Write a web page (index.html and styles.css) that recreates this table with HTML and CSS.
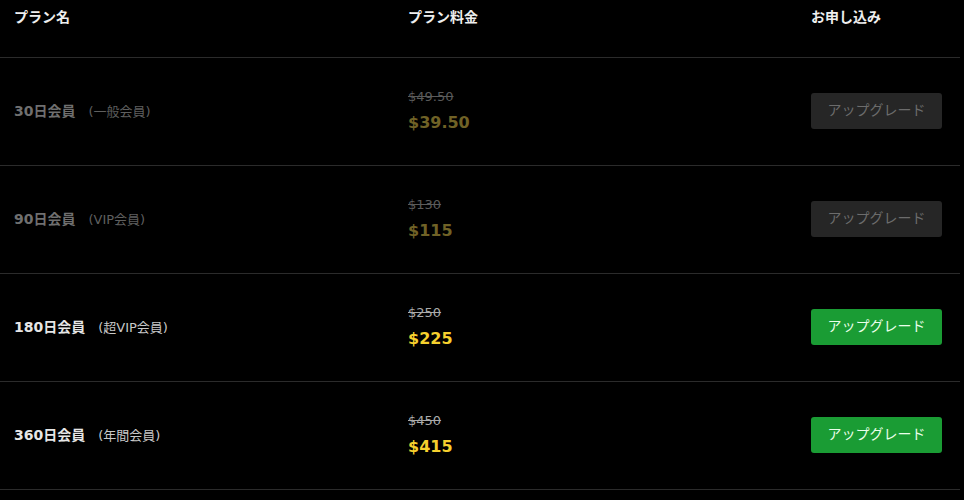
FILE: index.html
```html
<!DOCTYPE html>
<html lang="ja">
<head>
<meta charset="utf-8">
<link rel="stylesheet" href="styles.css">
</head>
<body>
<div class="plans">
  <div class="row head">
    <div class="cell">プラン名</div>
    <div class="cell">プラン料金</div>
    <div class="cell">お申し込み</div>
  </div>
  <div class="row dim">
    <div class="cell name"><b>30日会員</b><span class="sub">(一般会員)</span></div>
    <div class="cell price"><s>$49.50</s><strong>$39.50</strong></div>
    <div class="cell"><button class="btn off">アップグレード</button></div>
  </div>
  <div class="row dim">
    <div class="cell name"><b>90日会員</b><span class="sub">(VIP会員)</span></div>
    <div class="cell price"><s>$130</s><strong>$115</strong></div>
    <div class="cell"><button class="btn off">アップグレード</button></div>
  </div>
  <div class="row">
    <div class="cell name"><b>180日会員</b><span class="sub">(超VIP会員)</span></div>
    <div class="cell price"><s>$250</s><strong>$225</strong></div>
    <div class="cell"><button class="btn">アップグレード</button></div>
  </div>
  <div class="row">
    <div class="cell name"><b>360日会員</b><span class="sub">(年間会員)</span></div>
    <div class="cell price"><s>$450</s><strong>$415</strong></div>
    <div class="cell"><button class="btn">アップグレード</button></div>
  </div>
</div>
</body>
</html>
```
FILE: styles.css
```css
html, body {
  margin: 0;
  background: #000;
  color: #fff;
  font-family: "DejaVu Sans", "Noto Sans CJK JP", sans-serif;
  font-size: 13px;
}
.plans {
  width: 960px;
}
.row {
  display: grid;
  grid-template-columns: 394px 403px 163px;
  height: 108px;
  border-bottom: 1px solid #2b2b2b;
  box-sizing: border-box;
  align-items: center;
}
.row.head {
  height: 58px;
  align-items: start;
  font-weight: bold;
  font-size: 14px;
  color: #eee;
}
.head .cell {
  padding-top: 6px;
}
.cell {
  padding: 0 14px;
}
.name {
  line-height: 20px;
}
.name b {
  font-weight: bold;
  font-size: 14px;
  color: #e6e6e6;
}
.sub {
  margin-left: 13px;
  color: #c8c8c8;
}
.price {
  display: flex;
  flex-direction: column;
  gap: 4px;
}
.price s {
  color: #aaa;
  font-size: 13px;
  line-height: 18px;
}
.price strong {
  color: #f6d02e;
  font-size: 16px;
  line-height: 26px;
  font-weight: bold;
}
.btn {
  display: block;
  width: 131px;
  height: 36px;
  margin-bottom: 2px;
  border: 0;
  border-radius: 3px;
  background: #1a9c34;
  color: #eaffea;
  font-family: "Noto Sans CJK JP", sans-serif;
  font-size: 14px;
  padding: 0 0 3px;
  cursor: pointer;
}
.btn.off {
  background: #262626;
  color: #6c6c6c;
  cursor: default;
}
.dim .name b { color: #6f6f6f; }
.dim .sub { color: #5f5f5f; }
.dim .price s { color: #5a5a5a; }
.dim .price strong { color: #706226; }
```
